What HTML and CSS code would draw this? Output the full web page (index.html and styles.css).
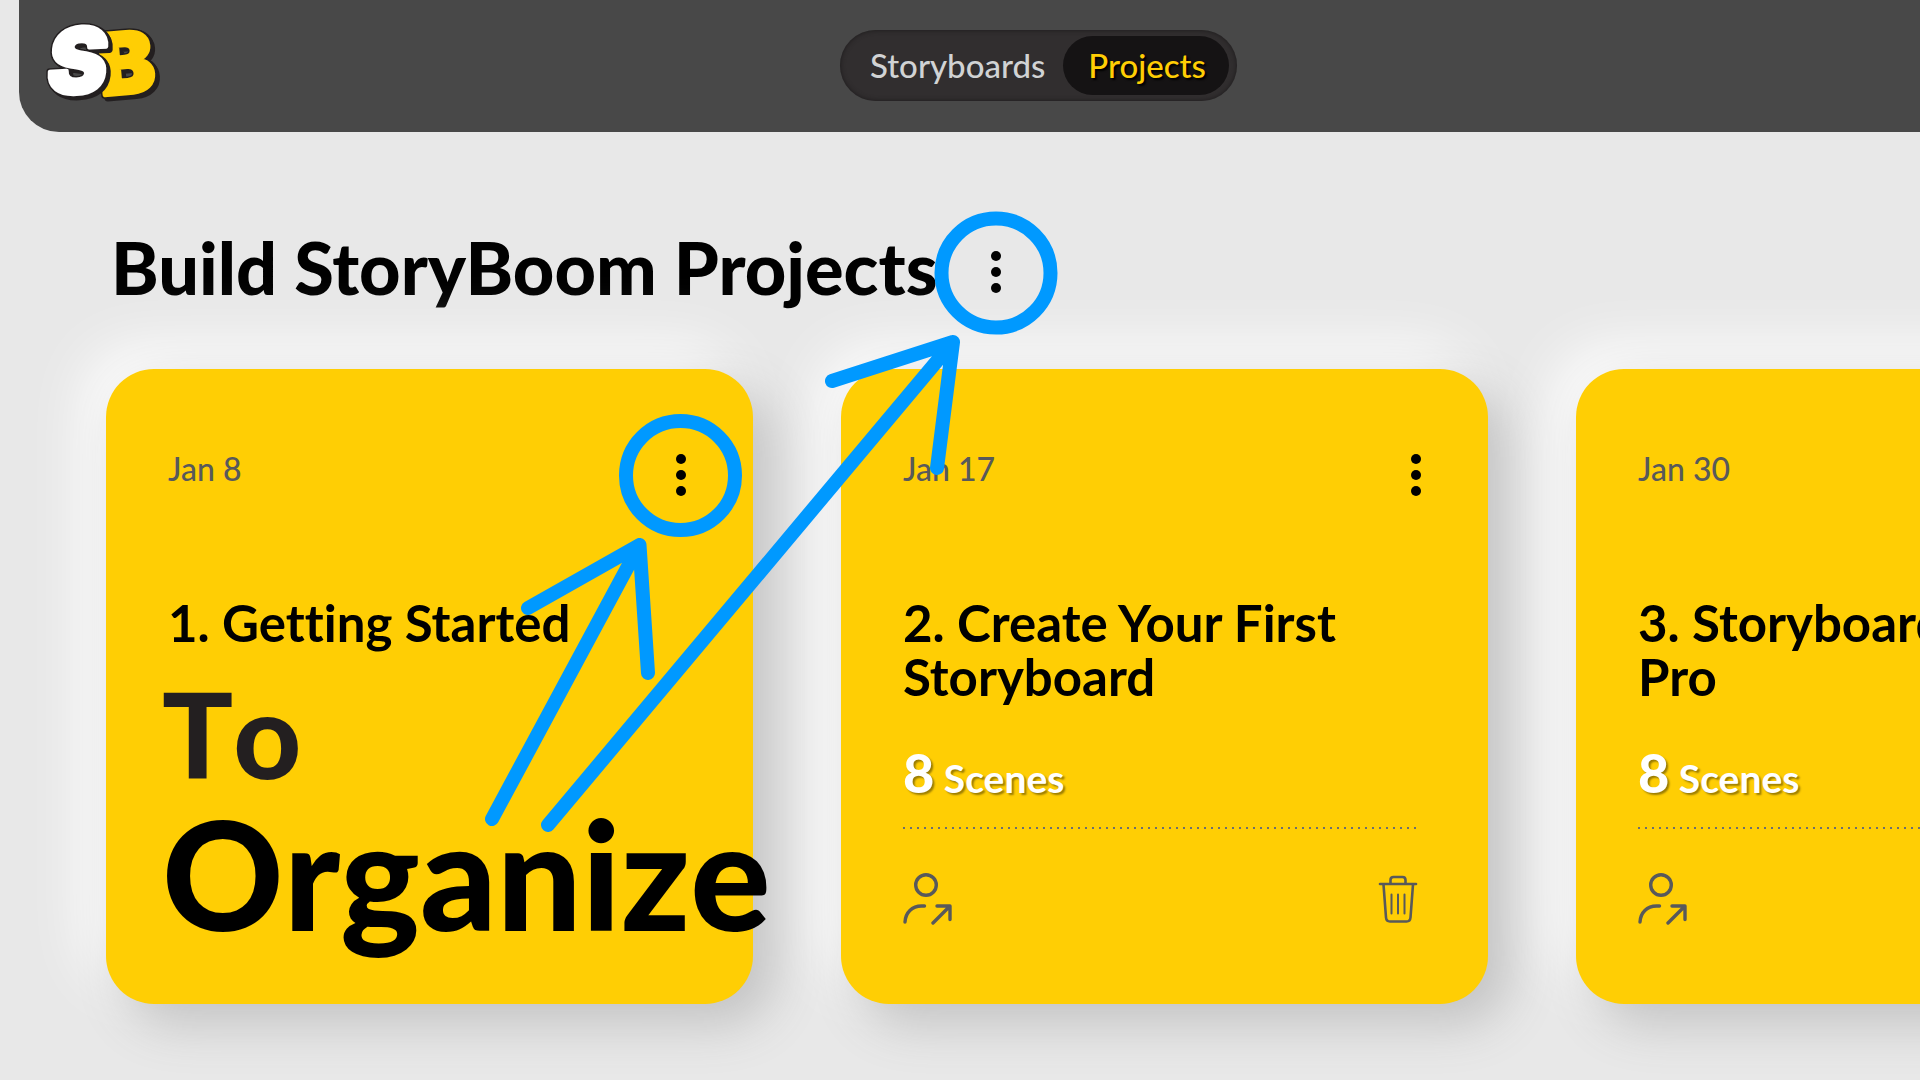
FILE: index.html
```html
<!DOCTYPE html>
<html lang="en">
<head>
<meta charset="utf-8">
<meta name="viewport" content="width=device-width, initial-scale=1">
<title>StoryBoom Projects</title>
<link rel="stylesheet" href="styles.css">
</head>
<body>
<svg class="defs" aria-hidden="true">
  <symbol id="dots" viewBox="0 0 12 52">
    <circle cx="6" cy="10" r="5"/><circle cx="6" cy="26" r="5"/><circle cx="6" cy="42" r="5"/>
  </symbol>
  <symbol id="share" viewBox="0 0 50 52">
    <g fill="none" stroke="currentColor" stroke-width="3.4" stroke-linecap="round" stroke-linejoin="round">
      <circle cx="23" cy="12" r="10.3"/>
      <path d="M2 49C2.500 39.500 9 33 18.500 33H21.500"/>
      <path d="M34 33H47V46.500M46.500 33.500L30 50"/>
    </g>
  </symbol>
  <symbol id="trash" viewBox="0 0 40 52">
    <g fill="none" stroke="currentColor" stroke-width="2.600" stroke-linecap="round" stroke-linejoin="round">
      <path d="M2 11H38"/>
      <path d="M12.500 10.500V7C12.500 5 13.500 4 15.500 4H24.500C26.500 4 27.500 5 27.500 7V10.500"/>
      <path d="M5.500 11.500L8 44.500C8.200 47 9.500 48.500 12 48.500H28.500C31 48.500 32.300 47 32.500 44.500L35 11.500"/>
      <path stroke-width="2" d="M13.500 21.500V40.500M20 21.500V40.500M26.500 21.500V40.500"/>
    </g>
  </symbol>
</svg>

<header class="topbar">
  <a class="logo" href="#" aria-label="StoryBoom home">
    <svg width="124" height="90" viewBox="0 0 124 90">
      <g transform="rotate(-5 84 42)">
        <text class="logo-b logo-edge" x="55" y="72">B</text>
        <text class="logo-b logo-edge" x="57" y="73">B</text>
        <text class="logo-b logo-edge" x="58" y="75">B</text>
        <text class="logo-b" x="55" y="72">B</text>
      </g>
      <g transform="rotate(-3 38 40)">
        <text class="logo-s logo-edge" x="4" y="72">S</text>
        <text class="logo-s logo-edge" x="6" y="73">S</text>
        <text class="logo-s logo-edge" x="7" y="75">S</text>
        <text class="logo-s" x="4" y="72">S</text>
      </g>
    </svg>
  </a>
  <nav class="switch">
    <a class="tab" href="#">Storyboards</a>
    <a class="tab tab-active" href="#" aria-current="page">Projects</a>
  </nav>
</header>

<main class="page">
  <div class="heading">
    <h1 class="title">Build StoryBoom Projects</h1>
    <button class="menu" type="button" aria-label="Project menu"><svg class="dots"><use href="#dots"/></svg></button>
  </div>

  <div class="cards">
    <article class="card card-front">
      <div class="card-top">
        <time class="date">Jan 8</time>
        <button class="menu" type="button" aria-label="Storyboard menu"><svg class="dots"><use href="#dots"/></svg></button>
      </div>
      <h2 class="name">1. Getting Started</h2>
      <p class="callout callout-small">To</p>
      <p class="callout callout-large">Organize</p>
    </article>

    <article class="card">
      <div class="card-top">
        <time class="date">Jan 17</time>
        <button class="menu" type="button" aria-label="Storyboard menu"><svg class="dots"><use href="#dots"/></svg></button>
      </div>
      <h2 class="name">2. Create Your First Storyboard</h2>
      <p class="scenes"><strong class="count">8</strong> Scenes</p>
      <div class="rule"></div>
      <div class="actions">
        <button class="action" type="button" aria-label="Share"><svg width="50" height="52"><use href="#share"/></svg></button>
        <button class="action" type="button" aria-label="Delete"><svg width="40" height="52"><use href="#trash"/></svg></button>
      </div>
    </article>

    <article class="card">
      <div class="card-top">
        <time class="date">Jan 30</time>
        <button class="menu" type="button" aria-label="Storyboard menu"><svg class="dots"><use href="#dots"/></svg></button>
      </div>
      <h2 class="name">3. Storyboard<br>Pro</h2>
      <p class="scenes"><strong class="count">8</strong> Scenes</p>
      <div class="rule"></div>
      <div class="actions">
        <button class="action" type="button" aria-label="Share"><svg width="50" height="52"><use href="#share"/></svg></button>
        <button class="action" type="button" aria-label="Delete"><svg width="40" height="52"><use href="#trash"/></svg></button>
      </div>
    </article>
  </div>
</main>

<svg class="marks" width="1100" height="860" viewBox="0 0 1100 860" aria-hidden="true">
  <circle cx="996" cy="273" r="54.500"/>
  <circle cx="680.500" cy="475.500" r="54.500"/>
  <path d="M492 819L639.500 545M528 608L639.500 545L648 673"/>
  <path d="M548 825L953 342M832 381L953 342L937 468"/>
</svg>
</body>
</html>
```
FILE: styles.css
```css
* { box-sizing: border-box; }

body {
  margin: 0;
  min-height: 100vh;
  position: relative;
  overflow-x: hidden;
  background: #e8e8e8;
  color: #000;
  font-family: Lato, "Open Sans", sans-serif;
  font-variant-ligatures: none;
}

h1, h2, p { margin: 0; }
button { padding: 0; border: 0; background: none; color: inherit; cursor: pointer; }
svg { display: block; }
.defs { position: absolute; width: 0; height: 0; }

.topbar {
  display: grid;
  grid-template-columns: 7fr auto 6fr;
  align-items: center;
  margin-left: 19px;
  padding: 15px 0 16px 24px;
  min-height: 132px;
  border-bottom-left-radius: 40px;
  background: #484848;
}

.logo { justify-self: start; }
.logo svg { overflow: visible; }
.logo-b, .logo-s {
  font-family: Inter, sans-serif;
  font-weight: 900;
  stroke-width: 4px;
  stroke-linejoin: round;
}
.logo-b { fill: #ffce04; stroke: #ffce04; font-size: 84px; }
.logo-s { fill: #fff; stroke: #fff; font-size: 90px; font-style: italic; }
.logo-edge { fill: #231f20; stroke: #231f20; stroke-width: 7px; }

.switch {
  display: flex;
  gap: 18px;
  padding: 6px 8px 6px 30px;
  border-radius: 36px;
  background: #312e2f;
  box-shadow: inset 0 0 5px #1c1a1b;
}
.tab {
  color: #d1d3d4;
  font-size: 33px;
  font-weight: 500;
  line-height: 59px;
  text-decoration: none;
}
.tab-active {
  padding: 0 23px 0 25px;
  border-radius: 30px;
  background: #151314;
  color: #ffce04;
  text-shadow: 2px 2px 2px #000;
}

.page { padding: 92px 0 77px 106px; }

.heading { display: flex; align-items: center; gap: 52px; padding-left: 5px; }
.title { font-size: 72px; font-weight: 900; line-height: 86px; }
.heading .menu { margin-top: 10px; }
.dots { width: 12px; height: 52px; }

.cards {
  display: grid;
  grid-auto-flow: column;
  grid-auto-columns: 647px;
  gap: 88px;
  margin-top: 59px;
}
.card {
  position: relative;
  padding: 80px 72px 79px 62px;
  border-radius: 48px;
  background: #ffce04;
  box-shadow: 20px 20px 50px #c2c2c2, -20px -20px 60px #fff;
}
.card-front { z-index: 1; padding-bottom: 50px; }

.card-top { display: flex; justify-content: space-between; align-items: flex-start; }
.card-top .menu { margin-right: -6px; }
.date { color: #58595b; font-size: 32px; font-weight: 500; line-height: 40px; }

.name { margin-top: 95px; font-size: 51px; font-weight: 700; line-height: 54px; }

.callout { margin-left: -6px; font-weight: 900; font-kerning: none; white-space: nowrap; }
.callout-small { margin-top: 24px; color: #231f20; font-size: 118px; line-height: 120px; }
.callout-large { margin-top: 4px; font-size: 150px; line-height: 150px; }

.scenes {
  margin-top: 39px;
  color: #fff;
  font-size: 39px;
  font-weight: 700;
  line-height: 60px;
  text-shadow: 2px 2px 2px rgba(0, 0, 0, .4);
}
.count { font-size: 54px; font-weight: 900; }

.rule {
  height: 2px;
  margin-top: 19px;
  background: repeating-linear-gradient(90deg, #6d6e71 0 2px, transparent 2px 7px);
}
.actions { display: flex; justify-content: space-between; margin-top: 44px; color: #58595b; }
.action:last-child { margin-right: -2px; }

.marks {
  position: absolute;
  z-index: 2;
  top: 0;
  left: 0;
  fill: none;
  stroke: #0099ff;
  stroke-width: 14px;
  stroke-linecap: round;
  stroke-linejoin: round;
  pointer-events: none;
}
```
